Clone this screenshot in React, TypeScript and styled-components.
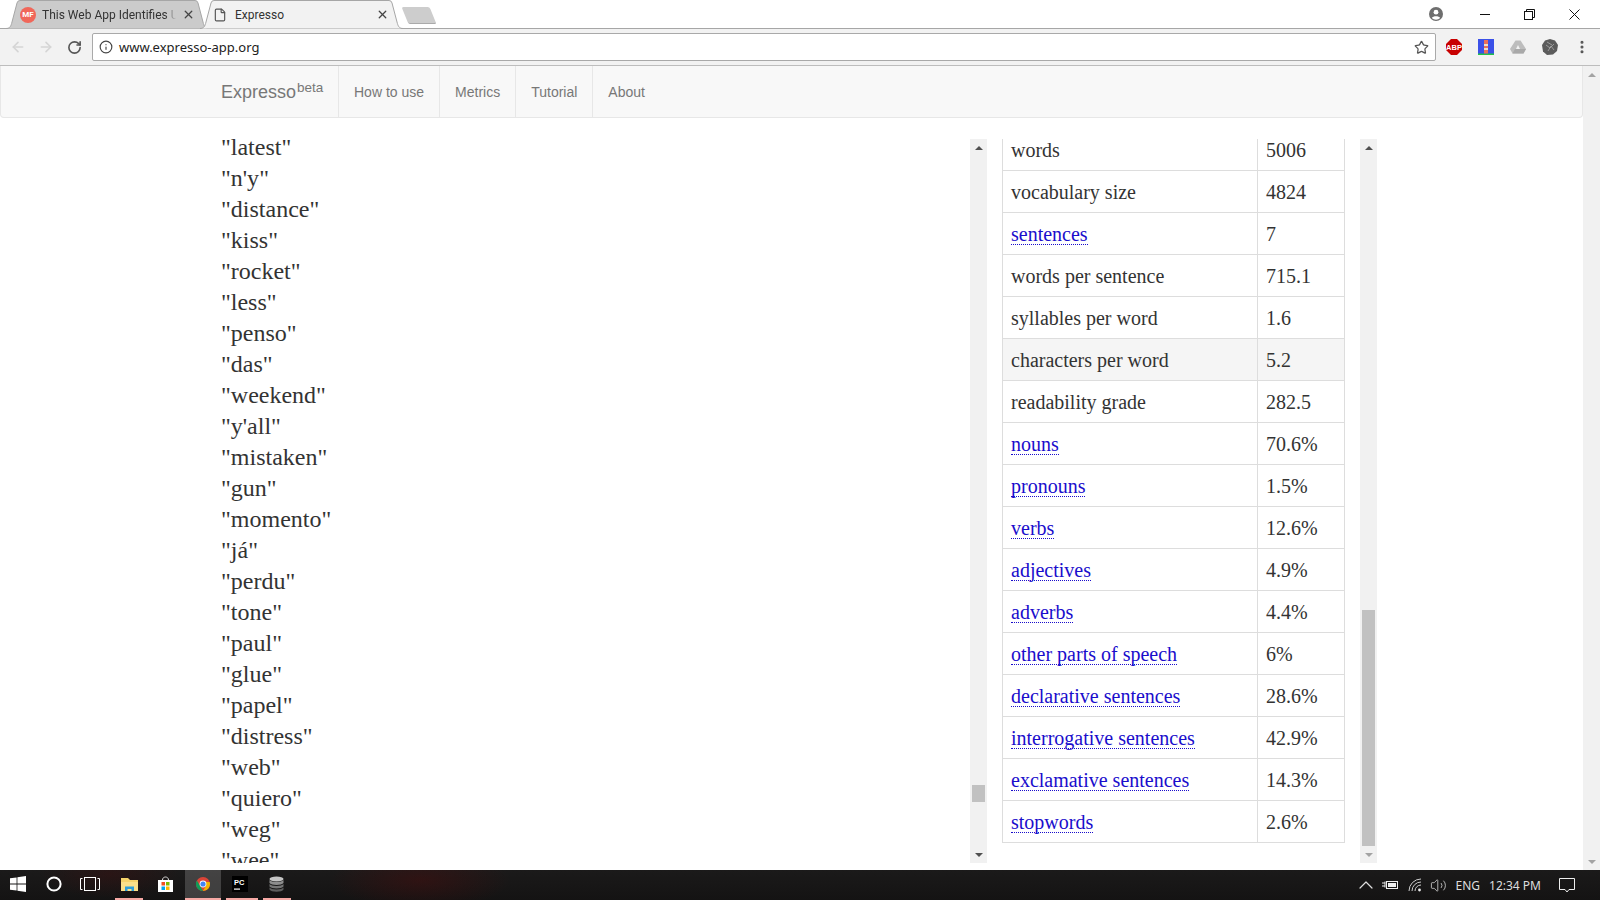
import React from 'react';
import styled, { createGlobalStyle } from 'styled-components';
import {
  ArrowLeft,
  ArrowRight,
  RotateCw,
  Info,
  Star,
  X,
  EllipsisVertical,
  ChevronUp,
  File,
  Volume2,
} from 'lucide-react';

const words = [
  'latest', "n'y", 'distance', 'kiss', 'rocket', 'less', 'penso', 'das', 'weekend', "y'all",
  'mistaken', 'gun', 'momento', 'já', 'perdu', 'tone', 'paul', 'glue', 'papel', 'distress',
  'web', 'quiero', 'weg', 'wee',
];

const metrics: { label: string; value: string; link?: boolean; hover?: boolean }[] = [
  { label: 'words', value: '5006' },
  { label: 'vocabulary size', value: '4824' },
  { label: 'sentences', value: '7', link: true },
  { label: 'words per sentence', value: '715.1' },
  { label: 'syllables per word', value: '1.6' },
  { label: 'characters per word', value: '5.2', hover: true },
  { label: 'readability grade', value: '282.5' },
  { label: 'nouns', value: '70.6%', link: true },
  { label: 'pronouns', value: '1.5%', link: true },
  { label: 'verbs', value: '12.6%', link: true },
  { label: 'adjectives', value: '4.9%', link: true },
  { label: 'adverbs', value: '4.4%', link: true },
  { label: 'other parts of speech', value: '6%', link: true },
  { label: 'declarative sentences', value: '28.6%', link: true },
  { label: 'interrogative sentences', value: '42.9%', link: true },
  { label: 'exclamative sentences', value: '14.3%', link: true },
  { label: 'stopwords', value: '2.6%', link: true },
];

const GlobalStyle = createGlobalStyle`
  html, body {
    margin: 0;
    padding: 0;
    height: 100%;
    overflow: hidden;
    background: #fff;
  }
  * {
    box-sizing: border-box;
  }
`;

const Screen = styled.div`
  width: 1600px;
  height: 900px;
  display: flex;
  flex-direction: column;
  overflow: hidden;
  font-family: 'Noto Sans', 'Open Sans', sans-serif;
`;

const TabStrip = styled.div`
  height: 29px;
  flex: none;
  display: flex;
  align-items: flex-end;
  padding-left: 6px;
  background: #fff;
  border-bottom: 1px solid #a6a6a6;
`;

const Tab = styled.div<{ $active?: boolean }>`
  position: relative;
  width: 203px;
  height: 29px;
  margin: 0 -9px -1px 0;
  display: flex;
  align-items: center;
  padding-right: 14px;
  font-family: Roboto, 'Noto Sans', sans-serif;
  font-size: 12px;
  color: #333;
  z-index: ${(p) => (p.$active ? 2 : 1)};

  &:last-of-type {
    margin-right: 0;
  }
`;

const TabShape = styled.svg`
  position: absolute;
  inset: 0;
  width: 100%;
  height: 100%;
  z-index: -1;
`;

const TabTitle = styled.span<{ $fade?: boolean }>`
  flex: 1;
  min-width: 0;
  margin-right: ${(p) => (p.$fade ? '6px' : '0')};
  white-space: nowrap;
  overflow: hidden;
  ${(p) =>
    p.$fade &&
    `-webkit-mask-image: linear-gradient(to right, #000 92%, transparent);
     mask-image: linear-gradient(to right, #000 92%, transparent);`}
`;

const Favicon = styled.span`
  width: 16px;
  height: 16px;
  margin: 0 6px 0 14px;
  border-radius: 50%;
  background: #f0675a;
  color: #fff;
  font-size: 8px;
  font-weight: 700;
  line-height: 16px;
  text-align: center;
  flex: none;
`;

const PageIcon = styled.span`
  display: flex;
  margin: 0 8px 0 13px;
  color: #555;
`;

const NewTab = styled.div`
  width: 28px;
  height: 17px;
  margin: 0 0 4px 11px;
  background: #cdcdcd;
  border-radius: 2px;
  transform: skewX(22deg);
  border-bottom: 1px solid #aaa;
`;

const StripSpacer = styled.div`
  flex: 1;
`;

const WindowControls = styled.div`
  align-self: stretch;
  display: flex;
  align-items: center;
  padding-right: 3px;
`;

const Profile = styled.svg`
  width: 14px;
  height: 14px;
  margin-right: 19px;
`;

const ControlBtn = styled.div`
  width: 45px;
  height: 26px;
  display: flex;
  align-items: center;
  justify-content: center;
`;

const Toolbar = styled.div`
  height: 37px;
  flex: none;
  display: flex;
  align-items: center;
  background: #f2f2f2;
  border-bottom: 1px solid #bdbdbd;
  padding-left: 4px;
`;

const NavIcon = styled.div<{ $off?: boolean }>`
  width: 28px;
  display: flex;
  justify-content: center;
  color: ${(p) => (p.$off ? '#d5d5d5' : '#555')};
`;

const Omnibox = styled.div`
  width: 1344px;
  height: 28px;
  margin: 0 8px 0 4px;
  display: flex;
  align-items: center;
  gap: 6px;
  padding: 0 6px;
  background: #fff;
  border: 1px solid #a9a9a9;
  border-radius: 2px;
  font-size: 13px;
  color: #222;
`;

const Url = styled.span`
  flex: 1;
`;

const Extensions = styled.div`
  flex: 1;
  display: flex;
  align-items: center;
  gap: 16px;
  padding-left: 2px;
`;

const ExtIcon = styled.svg`
  width: 16px;
  height: 16px;
  flex: none;
`;

const Viewport = styled.div`
  flex: 1;
  min-height: 0;
  display: flex;
  background: #fff;
`;

const Page = styled.div`
  flex: 1;
  min-width: 0;
  display: flex;
  flex-direction: column;
`;

const Navbar = styled.nav`
  height: 52px;
  flex: none;
  display: flex;
  padding-left: 205px;
  background: #f8f8f8;
  border: 1px solid #e7e7e7;
  border-top: none;
  border-radius: 0 0 4px 4px;
  font-family: 'Liberation Sans', Arial, sans-serif;
`;

const Brand = styled.a`
  width: 132px;
  padding-left: 15px;
  font-size: 18px;
  line-height: 53px;
  color: #777;
`;

const Beta = styled.sup`
  margin-left: 1px;
  font-size: 13.5px;
  line-height: 0;
  position: relative;
  top: 1px;
  vertical-align: super;
`;

const NavLink = styled.a`
  padding: 0 15px;
  font-size: 14px;
  line-height: 53px;
  color: #777;
  border-left: 1px solid #e7e7e7;
`;

const Content = styled.div`
  flex: 1;
  min-height: 0;
  display: flex;
  padding: 21px 0 7px 221px;
  font-family: 'Liberation Serif', 'Times New Roman', serif;
  color: #333;
`;

const WordPane = styled.div`
  width: 749px;
  overflow: hidden;
  font-size: 24px;
`;

const WordList = styled.div`
  margin-top: -7px;
`;

const Word = styled.div`
  height: 31px;
  line-height: 31px;
`;

const Scrollbar = styled.div`
  width: 17px;
  flex: none;
  display: flex;
  flex-direction: column;
  align-items: center;
  background: #f1f1f1;
`;

const ArrowBtn = styled.div<{ $down?: boolean; $dim?: boolean }>`
  height: 17px;
  flex: none;
  display: flex;
  align-items: center;
  justify-content: center;
  &::after {
    content: '';
    border-left: 4px solid transparent;
    border-right: 4px solid transparent;
    ${(p) => (p.$down ? 'border-top' : 'border-bottom')}: 4px solid ${(p) =>
      p.$dim ? '#a3a3a3' : '#505050'};
  }
`;

const Track = styled.div`
  flex: 1;
  width: 100%;
  min-height: 0;
  display: flex;
  justify-content: center;
  align-items: flex-end;
`;

const Thumb = styled.div<{ $height: number; $tail: number }>`
  width: 13px;
  height: ${(p) => p.$height}px;
  margin-bottom: ${(p) => p.$tail}px;
  background: #c1c1c1;
`;

const MetricPane = styled.div`
  width: 343px;
  margin-left: 15px;
  overflow: hidden;
  font-size: 20px;
`;

const Table = styled.div`
  margin-top: -10px;
  border: solid #ddd;
  border-width: 0 1px 1px;
`;

const Row = styled.div<{ $hover?: boolean }>`
  height: 42px;
  display: grid;
  grid-template-columns: 254px 1fr;
  border-bottom: 1px solid #ddd;
  background: ${(p) => (p.$hover ? '#f5f5f5' : 'transparent')};

  &:last-child {
    border-bottom: none;
    height: 41px;
  }
`;

const Cell = styled.div`
  padding: 1px 8px 0;
  display: flex;
  align-items: center;
  white-space: nowrap;

  & + & {
    border-left: 1px solid #ddd;
  }
`;

const MetricLink = styled.a`
  color: #1a0dcc;
  line-height: 20px;
  border-bottom: 1px dotted #1a0dcc;
`;

const MetricScroll = styled(Scrollbar)`
  margin-left: 15px;
`;

const Taskbar = styled.div`
  height: 30px;
  flex: none;
  display: flex;
  align-items: stretch;
  color: #eee;
  background:
    radial-gradient(ellipse 90px 30px at 420px 10px, rgba(90, 10, 10, 0.35), transparent),
    radial-gradient(ellipse 70px 24px at 110px 4px, rgba(70, 14, 14, 0.35), transparent),
    linear-gradient(#1b1a1a, #141313);
`;

const TaskItem = styled.div<{ $width: number; $active?: boolean; $running?: boolean; $nudge?: number }>`
  width: ${(p) => p.$width}px;
  flex: none;
  display: flex;
  align-items: center;
  justify-content: center;
  padding: ${(p) => (p.$nudge && p.$nudge > 0 ? `0 0 0 ${p.$nudge}px` : p.$nudge ? `0 ${-p.$nudge}px 0 0` : '0')};
  background: ${(p) => (p.$active ? 'rgba(255,255,255,.18)' : 'transparent')};
  border-bottom: 2px solid ${(p) => (p.$running ? '#f6a9a5' : 'transparent')};
`;

const TaskGap = styled.div<{ $width: number }>`
  width: ${(p) => p.$width}px;
  flex: none;
`;

const TaskSpacer = styled.div`
  flex: 1;
`;

const Tray = styled.div`
  display: flex;
  align-items: center;
  padding-right: 25px;
  font-family: 'Noto Sans', sans-serif;
  font-size: 12px;
  color: #ddd;
`;

const TrayIcon = styled.div<{ $gap: number }>`
  display: flex;
  margin-right: ${(p) => p.$gap}px;
`;

const TrayText = styled.span<{ $gap: number }>`
  margin-right: ${(p) => p.$gap}px;
  white-space: nowrap;
`;

function ChromeLogo() {
  return (
    <ExtIcon viewBox="0 0 16 16">
      <circle cx="8" cy="8" r="7" fill="#db4437" />
      <path d="M8 15 A7 7 0 0 1 1.9 4.5 L5 9.7 Z" fill="#0f9d58" />
      <path d="M8 15 A7 7 0 0 0 14.7 6 H8 L11 9.7 Z" fill="#f4b400" />
      <circle cx="8" cy="8" r="3.4" fill="#fff" />
      <circle cx="8" cy="8" r="2.6" fill="#4285f4" />
    </ExtIcon>
  );
}

const tabPath = 'M0 28.5 C4 28.5 5 26 6 22 L11 3 Q11.5 0.5 14 0.5 H189 Q191.5 0.5 192 3 L197 22 C198 26 199 28.5 203 28.5';

export default function App() {
  return (
    <Screen>
      <GlobalStyle />
      <TabStrip>
        <Tab>
          <TabShape viewBox="0 0 203 29">
            <path d={tabPath} fill="#cbcbcb" stroke="#a6a6a6" />
          </TabShape>
          <Favicon>MF</Favicon>
          <TabTitle $fade>This Web App Identifies U</TabTitle>
          <X size={13} color="#444" strokeWidth={2.4} />
        </Tab>
        <Tab $active>
          <TabShape viewBox="0 0 203 29">
            <path d={tabPath} fill="#f2f2f2" stroke="#a6a6a6" />
          </TabShape>
          <PageIcon>
            <File size={14} />
          </PageIcon>
          <TabTitle>Expresso</TabTitle>
          <X size={13} color="#444" strokeWidth={2.4} />
        </Tab>
        <NewTab />
        <StripSpacer />
        <WindowControls>
          <Profile viewBox="0 0 14 14">
            <circle cx="7" cy="7" r="7" fill="#6e6e6e" />
            <circle cx="7" cy="5.2" r="2.4" fill="#fff" />
            <path d="M2.8 11 C4 8.6 10 8.6 11.2 11 A6 6 0 0 1 2.8 11Z" fill="#fff" />
          </Profile>
          <ControlBtn>
            <svg width="10" height="10" viewBox="0 0 10 10" stroke="#111">
              <path d="M0 5.5 H10" />
            </svg>
          </ControlBtn>
          <ControlBtn>
            <svg width="11" height="11" viewBox="0 0 11 11" fill="none" stroke="#111">
              <rect x="0.5" y="2.5" width="8" height="8" />
              <path d="M2.5 2.5 V0.5 H10.5 V8.5 H8.5" />
            </svg>
          </ControlBtn>
          <ControlBtn>
            <svg width="11" height="11" viewBox="0 0 11 11" stroke="#111">
              <path d="M0.5 0.5 L10.5 10.5 M10.5 0.5 L0.5 10.5" />
            </svg>
          </ControlBtn>
        </WindowControls>
      </TabStrip>

      <Toolbar>
        <NavIcon $off>
          <ArrowLeft size={16} strokeWidth={2.4} />
        </NavIcon>
        <NavIcon $off>
          <ArrowRight size={16} strokeWidth={2.4} />
        </NavIcon>
        <NavIcon>
          <RotateCw size={15} strokeWidth={2.6} />
        </NavIcon>
        <Omnibox>
          <Info size={14} color="#444" />
          <Url>www.expresso-app.org</Url>
          <Star size={15} color="#555" strokeWidth={2} />
        </Omnibox>
        <Extensions>
          <ExtIcon viewBox="0 0 16 16">
            <path d="M5 0 H11 L16 5 V11 L11 16 H5 L0 11 V5 Z" fill="#c80000" />
            <text x="8" y="11" textAnchor="middle" fontSize="7.5" fontWeight="700" fill="#fff" fontFamily="Liberation Sans">
              ABP
            </text>
          </ExtIcon>
          <ExtIcon viewBox="0 0 16 16">
            <rect width="16" height="16" fill="#3b51e8" />
            <rect y="14.5" width="16" height="1.5" fill="#1fc24a" />
            <rect x="6" y="1" width="4" height="13.5" fill="#e8705a" />
            <rect x="6" y="5" width="4" height="2" fill="#eadfc8" />
            <rect x="6" y="9" width="4" height="2" fill="#eadfc8" />
          </ExtIcon>
          <ExtIcon viewBox="0 0 16 16">
            <path d="M5.5 1.5 H10.5 L16 10 L13.5 14.5 H2.5 L0 10 Z" fill="#bdbdbd" />
            <path d="M8 6 L10 10 H6 Z" fill="#f2f2f2" />
            <path d="M2.5 14.5 L5 10 H16 L13.5 14.5 Z" fill="#a9a9a9" />
          </ExtIcon>
          <ExtIcon viewBox="0 0 16 16">
            <path d="M8 0 L13 1.5 L16 6 L15 12 L11 15.5 L5 16 L1 12.5 L0 6 L3 1.5 Z" fill="#5c5c5c" />
            <path d="M4 6 L8 9 L12 5 M6 12 L9 7 L12 11 M5 3 L10 6" stroke="#b5b5b5" strokeWidth="0.7" fill="none" />
          </ExtIcon>
          <EllipsisVertical size={16} color="#555" strokeWidth={2.6} />
        </Extensions>
      </Toolbar>

      <Viewport>
        <Page>
          <Navbar>
            <Brand>
              Expresso<Beta>beta</Beta>
            </Brand>
            <NavLink>How to use</NavLink>
            <NavLink>Metrics</NavLink>
            <NavLink>Tutorial</NavLink>
            <NavLink>About</NavLink>
          </Navbar>
          <Content>
            <WordPane>
              <WordList>
                {words.map((w) => (
                  <Word key={w}>"{w}"</Word>
                ))}
              </WordList>
            </WordPane>
            <Scrollbar>
              <ArrowBtn />
              <Track>
                <Thumb $height={17} $tail={44} />
              </Track>
              <ArrowBtn $down />
            </Scrollbar>
            <MetricPane>
              <Table>
                {metrics.map((m) => (
                  <Row key={m.label} $hover={m.hover}>
                    <Cell>{m.link ? <MetricLink>{m.label}</MetricLink> : m.label}</Cell>
                    <Cell>{m.value}</Cell>
                  </Row>
                ))}
              </Table>
            </MetricPane>
            <MetricScroll>
              <ArrowBtn />
              <Track>
                <Thumb $height={236} $tail={0} />
              </Track>
              <ArrowBtn $down $dim />
            </MetricScroll>
          </Content>
        </Page>
        <Scrollbar>
          <ArrowBtn $dim />
          <Track />
          <ArrowBtn $down $dim />
        </Scrollbar>
      </Viewport>

      <Taskbar>
        <TaskItem $width={36}>
          <svg width="16" height="16" viewBox="0 0 16 16" fill="#fff">
            <path d="M0 2.3 L6.6 1.4 V7.5 H0 Z M7.4 1.3 L16 0 V7.5 H7.4 Z M0 8.4 H6.6 V14.6 L0 13.7 Z M7.4 8.4 H16 V16 L7.4 14.8 Z" />
          </svg>
        </TaskItem>
        <TaskItem $width={36}>
          <svg width="16" height="16" viewBox="0 0 16 16" fill="none" stroke="#fff" strokeWidth="2">
            <circle cx="8" cy="8" r="6.6" />
          </svg>
        </TaskItem>
        <TaskItem $width={36}>
          <svg width="20" height="14" viewBox="0 0 20 14" fill="none" stroke="#fff">
            <rect x="4.5" y="0.5" width="11" height="13" />
            <path d="M2.5 1.5 H0.5 V12.5 H2.5 M17.5 1.5 H19.5 V12.5 H17.5" />
          </svg>
        </TaskItem>
        <TaskGap $width={7} />
        <TaskItem $width={28} $running>
          <svg width="17" height="15" viewBox="0 0 17 15">
            <path d="M0 1 H7 L9 3 H17 V14 H0 Z" fill="#f6d36b" />
            <rect y="5" width="17" height="9" fill="#fbe08a" />
            <path d="M4 14 V9.5 H13 V14 H10.5 V12 H6.5 V14 Z" fill="#2f9fd8" />
          </svg>
        </TaskItem>
        <TaskItem $width={42} $nudge={2}>
          <svg width="15" height="16" viewBox="0 0 15 16">
            <path d="M0 4 H15 V16 H0 Z" fill="#fff" />
            <path d="M4.5 4 C4.5 0 10.5 0 10.5 4" fill="none" stroke="#ddd" />
            <rect x="3.5" y="6" width="3.5" height="3.5" fill="#f25022" />
            <rect x="8" y="6" width="3.5" height="3.5" fill="#7fba00" />
            <rect x="3.5" y="10.5" width="3.5" height="3.5" fill="#00a4ef" />
            <rect x="8" y="10.5" width="3.5" height="3.5" fill="#ffb900" />
          </svg>
        </TaskItem>
        <TaskItem $width={36} $active $running>
          <ChromeLogo />
        </TaskItem>
        <TaskGap $width={5} />
        <TaskItem $width={32} $running $nudge={-4}>
          <svg width="16" height="16" viewBox="0 0 16 16">
            <rect width="16" height="16" fill="#000" />
            <text x="2" y="8.5" fontSize="7.5" fontWeight="700" fill="#fff" fontFamily="Liberation Sans">
              PC
            </text>
            <rect x="2" y="12.5" width="6" height="1.2" fill="#fff" />
          </svg>
        </TaskItem>
        <TaskGap $width={5} />
        <TaskItem $width={28} $running $nudge={-2}>
          <svg width="15" height="16" viewBox="0 0 15 16">
            <ellipse cx="7.5" cy="3" rx="7" ry="2.6" fill="#c4c4c4" />
            <path d="M0.5 4 C2 6.6 13 6.6 14.5 4 V7 C13 9.6 2 9.6 0.5 7 Z" fill="#8d8d8d" />
            <path d="M0.5 8 C2 10.6 13 10.6 14.5 8 V10.5 C13 13 2 13 0.5 10.5 Z" fill="#757575" />
            <path d="M0.5 11.5 C2 14 13 14 14.5 11.5 V13.5 C13 16.4 2 16.4 0.5 13.5 Z" fill="#5e5e5e" />
          </svg>
        </TaskItem>
        <TaskSpacer />
        <Tray>
          <TrayIcon $gap={4}>
            <ChevronUp size={24} color="#ddd" strokeWidth={1.2} />
          </TrayIcon>
          <TrayIcon $gap={10}>
            <svg width="16" height="10" viewBox="0 0 16 10" fill="none" stroke="#eee">
              <rect x="4.5" y="1.5" width="11" height="7" />
              <rect x="6" y="3" width="8" height="4" fill="#eee" stroke="none" />
              <path d="M0 3 H3 M0 6 H3 M3 1.5 V7.5" />
            </svg>
          </TrayIcon>
          <TrayIcon $gap={8}>
            <svg width="14" height="14" viewBox="0 0 14 14" fill="none" stroke="#ccc">
              <path d="M1 13 A12 12 0 0 1 13 1 M4 13 A9 9 0 0 1 13 4 M7 13 A6 6 0 0 1 13 7" />
              <circle cx="11.5" cy="12" r="1.4" fill="#eee" stroke="none" />
            </svg>
          </TrayIcon>
          <TrayIcon $gap={9}>
            <Volume2 size={17} color="#ddd" strokeWidth={1.1} />
          </TrayIcon>
          <TrayText $gap={9}>ENG</TrayText>
          <TrayText $gap={18}>12:34 PM</TrayText>
          <svg width="16" height="15" viewBox="0 0 16 15" fill="none" stroke="#eee">
            <path d="M0.5 0.5 H15.5 V11.5 H10 L8 14 L6 11.5 H0.5 Z" />
          </svg>
        </Tray>
      </Taskbar>
    </Screen>
  );
}
